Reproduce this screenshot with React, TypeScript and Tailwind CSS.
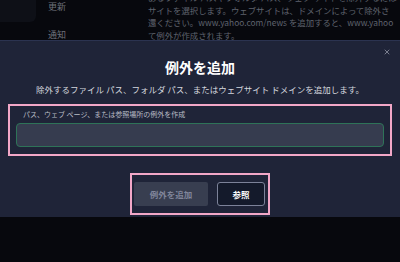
import { X } from 'lucide-react';

const jp = "font-['Noto_Sans_CJK_JP','Noto_Sans',sans-serif]";

export default function App() {
  return (
    <div className={`relative h-[262px] w-[400px] overflow-hidden bg-[#07080d] ${jp}`}>
      {/* Settings page behind the dialog */}
      <div className="flex h-[40px] overflow-hidden">
        <div className="w-[36px] shrink-0">
          <div className="h-[22px] rounded-br-md bg-[#0e1017]" />
        </div>
        <div className="flex w-[112px] shrink-0 flex-col gap-[16px] pl-[12px] pt-[1px] text-[9px] leading-[12px] text-[#6d707a]">
          <span>更新</span>
          <span>通知</span>
        </div>
        <div className="-mt-[9px] w-[260px] shrink-0 whitespace-nowrap text-[8.4px] leading-[12.5px] text-[#5f636e]">
          <div>あるファイル パスやフォルダ パス、ウェブ サイトを除外するには</div>
          <div>サイトを選択します。ウェブサイトは、ドメインによって除外さ</div>
          <div>還ください。www.yahoo.com/news を追加すると、www.yahoo</div>
          <div>て例外が作成されます。</div>
        </div>
      </div>

      {/* Dialog */}
      <div className="absolute left-0 top-[40px] w-[400px] border-t border-[#2b3350] bg-[#1f2438] pb-[2px]">
        <button className="absolute right-[9px] top-[7px] text-[#8b90a0]">
          <X className="h-[8px] w-[8px]" strokeWidth={2.5} />
        </button>
        <h2 className="pt-[16px] text-center text-[14px] font-bold leading-[20px] text-white">例外を追加</h2>
        <p className="mt-[6px] text-center text-[8.5px] leading-[12px] text-[#d4d7de]">
          除外するファイル パス、フォルダ パス、またはウェブサイト ドメインを追加します。
        </p>

        <div className="mx-[8px] mt-[9px] h-[52px] border-2 border-[#f2a7c7] px-[6px] pt-[3px]">
          <div className="pl-[7px] text-[7px] leading-[11px] text-[#b9bcc6]">
            パス、ウェブ ページ、または参照場所の例外を作成
          </div>
          <div className="mt-[3px] h-[24px] rounded-[4px] border border-[#2e7358] bg-[#363c4f]" />
        </div>

        <div className="mt-[17px] flex justify-center">
          <div className="flex h-[42px] w-[140px] items-center gap-[9px] border-2 border-[#f2a7c7] pl-[2px]">
            <button className="h-[24px] w-[74px] rounded-[2px] bg-[#383e50] text-[8.5px] font-bold text-[#80859a]">
              例外を追加
            </button>
            <button className="h-[24px] w-[48px] rounded-[3px] border border-[#7c8299] bg-[#141a2b] text-[8.5px] font-bold text-white">
              参照
            </button>
          </div>
        </div>
      </div>
    </div>
  );
}
